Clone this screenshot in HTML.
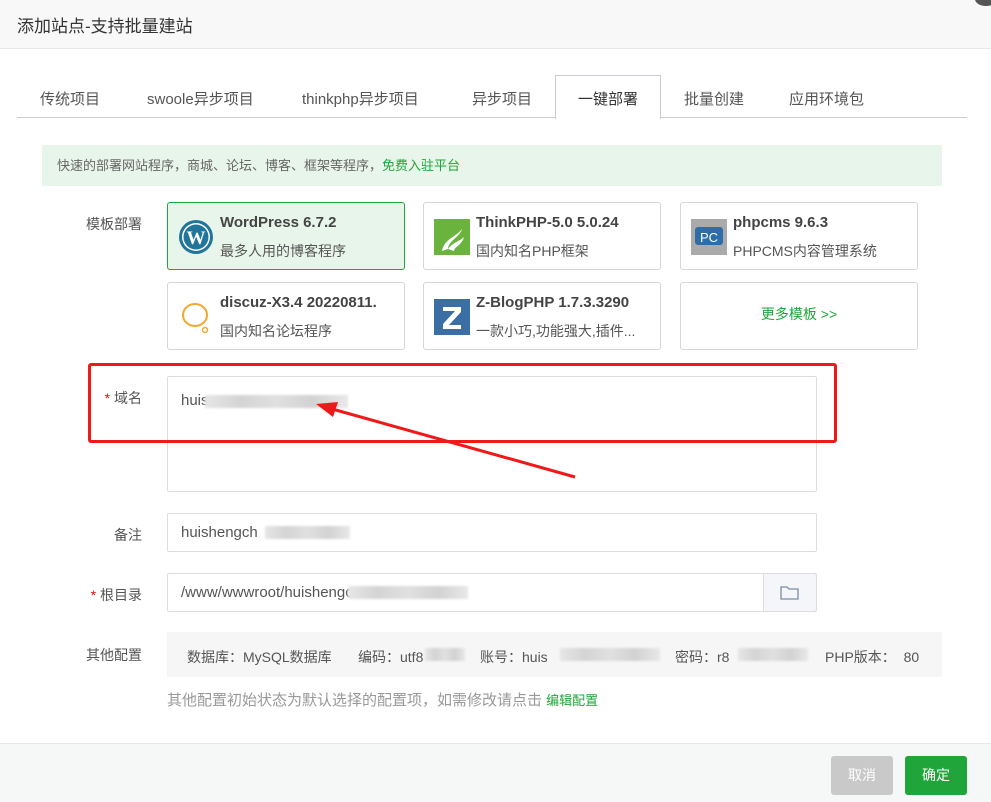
<!DOCTYPE html>
<html><head><meta charset="utf-8"><style>
*{margin:0;padding:0;box-sizing:border-box}
body{width:991px;height:802px;position:relative;background:#fff;font-family:"Liberation Sans","Noto Sans CJK SC",sans-serif;color:#555;font-size:14px;overflow:hidden}
.a{position:absolute}
.hdr{left:0;top:0;width:991px;height:49px;background:#f8f8f8;border-bottom:1px solid #e8e8e8}
.hdr span{position:absolute;left:17px;top:12px;font-size:17px;color:#333}
.tabline{left:17px;top:117px;width:950px;height:1px;background:#ccc9d8}
.tab{top:88px;font-size:15px;color:#555}
.act{left:555px;top:75px;width:106px;height:44px;border:1px solid #ccc9d8;border-bottom:none;background:#fff}
.alert{left:42px;top:145px;width:900px;height:41px;background:#e8f5ea;font-size:13px;line-height:41px;padding-left:15px;color:#666}
.lbl{font-size:14px;color:#555;text-align:right;width:100px;left:42px}
.card{width:238px;height:68px;border:1px solid #d6d6d6;border-radius:3px;background:#fff}
.card b{position:absolute;left:52px;top:11px;font-size:15px;color:#444}
.card i{position:absolute;left:52px;top:38px;font-style:normal;font-size:14px;color:#555}
.ic{position:absolute;left:10px;top:16px;width:36px;height:36px}
.inp{border:1px solid #ddd;border-radius:2px;background:#fff;font-size:15px;color:#555;padding-left:13px}
.blur{background:linear-gradient(90deg,#e6e6e6,#d4d4d4,#e0e0e0,#d2d2d2,#e8e8e8);filter:blur(1px)}
.cf{top:647px;font-size:14px;color:#555;white-space:nowrap}
</style></head><body>
<div class="a hdr"><span>添加站点-支持批量建站</span></div>
<div class="a" style="left:975px;top:-8px;width:22px;height:14px;border-radius:50%;background:#555"></div>
<div class="a tabline"></div>
<div class="a act"></div>
<div class="a tab" style="left:40px">传统项目</div>
<div class="a tab" style="left:147px">swoole异步项目</div>
<div class="a tab" style="left:302px">thinkphp异步项目</div>
<div class="a tab" style="left:472px">异步项目</div>
<div class="a tab" style="left:578px;color:#333">一键部署</div>
<div class="a tab" style="left:684px">批量创建</div>
<div class="a tab" style="left:789px">应用环境包</div>
<div class="a alert">快速的部署网站程序，商城、论坛、博客、框架等程序，<span style="color:#20a53a">免费入驻平台</span></div>

<div class="a lbl" style="top:214px">模板部署</div>
<div class="a card" style="left:167px;top:202px;background:#e8f5ea;border-color:#20a53a">
<svg class="ic" viewBox="0 0 36 36"><circle cx="18" cy="18" r="17" fill="#21759b"/><circle cx="18" cy="18" r="14" fill="#fff"/><circle cx="18" cy="18" r="12.5" fill="#21759b"/><text x="18" y="25" font-size="19" font-weight="bold" fill="#fff" text-anchor="middle" font-family="Liberation Serif">W</text></svg>
<b>WordPress 6.7.2</b><i>最多人用的博客程序</i></div>
<div class="a card" style="left:423px;top:202px">
<svg class="ic" viewBox="0 0 36 36"><rect width="36" height="36" fill="#6ab43e"/><path d="M8 32 C10 20 22 18 28 10 C26 18 14 22 14 30 Z M14 30 C18 24 26 22 30 18 C28 26 20 28 20 32Z" fill="#fff"/></svg>
<b>ThinkPHP-5.0 5.0.24</b><i>国内知名PHP框架</i></div>
<div class="a card" style="left:680px;top:202px">
<svg class="ic" viewBox="0 0 36 36"><rect width="36" height="36" fill="#aaa"/><rect x="4" y="8" width="28" height="18" rx="3" fill="#2d6ea8"/><text x="18" y="23" font-size="13" fill="#fff" text-anchor="middle">PC</text></svg>
<b>phpcms 9.6.3</b><i>PHPCMS内容管理系统</i></div>
<div class="a card" style="left:167px;top:282px">
<svg class="ic" viewBox="0 0 36 36"><ellipse cx="17" cy="16" rx="12" ry="11" fill="none" stroke="#f0a830" stroke-width="2"/><circle cx="27" cy="31" r="2.5" fill="none" stroke="#f0a830" stroke-width="1.5"/></svg>
<b>discuz-X3.4 20220811.</b><i>国内知名论坛程序</i></div>
<div class="a card" style="left:423px;top:282px">
<svg class="ic" viewBox="0 0 36 36"><rect width="36" height="36" fill="#3a6ea5"/><path d="M9 8h18v5L15 26h12v4H9v-5L21 12H9z" fill="#fff"/></svg>
<b>Z-BlogPHP 1.7.3.3290</b><i>一款小巧,功能强大,插件...</i></div>
<div class="a card" style="left:680px;top:282px;text-align:center;line-height:62px;color:#20a53a;font-size:14px">更多模板 &gt;&gt;</div>

<div class="a lbl" style="top:388px"><span style="color:#ef0808">*</span> 域名</div>
<div class="a inp" style="left:167px;top:376px;width:650px;height:116px;padding-top:15px">huis</div>
<div class="a blur" style="left:205px;top:395px;width:143px;height:13px"></div>
<div class="a" style="left:88px;top:363px;width:749px;height:80px;border:3px solid #f01919;border-radius:3px"></div>
<svg class="a" style="left:300px;top:395px" width="290" height="90"><line x1="275" y1="82" x2="25" y2="12" stroke="#f01919" stroke-width="3"/><path d="M16 9 L38 7 L33 22 Z" fill="#f01919"/></svg>

<div class="a lbl" style="top:525px">备注</div>
<div class="a inp" style="left:167px;top:513px;width:650px;height:39px;line-height:37px">huishengch</div>
<div class="a blur" style="left:265px;top:526px;width:85px;height:13px"></div>

<div class="a lbl" style="top:585px"><span style="color:#ef0808">*</span> 根目录</div>
<div class="a inp" style="left:167px;top:573px;width:650px;height:39px;line-height:37px">/www/wwwroot/huishengc</div>
<div class="a blur" style="left:348px;top:586px;width:120px;height:13px"></div>
<div class="a" style="left:763px;top:573px;width:54px;height:39px;background:#f4f6fa;border:1px solid #ddd;border-radius:0 3px 3px 0"></div>
<svg class="a" style="left:780px;top:585px" width="20" height="16"><path d="M1 2h6l2 2h9v10H1z" fill="none" stroke="#7a8ba8" stroke-width="1.3"/></svg>

<div class="a lbl" style="top:645px">其他配置</div>
<div class="a" style="left:167px;top:632px;width:775px;height:45px;background:#f6f6f6"></div>
<div class="a cf" style="left:187px">数据库：MySQL数据库</div>
<div class="a cf" style="left:358px">编码：utf8</div>
<div class="a cf" style="left:480px">账号：huis</div>
<div class="a cf" style="left:675px">密码：r8</div>
<div class="a cf" style="left:825px">PHP版本：&nbsp; 80</div>
<div class="a blur" style="left:425px;top:648px;width:40px;height:13px"></div>
<div class="a blur" style="left:560px;top:648px;width:100px;height:13px"></div>
<div class="a blur" style="left:738px;top:648px;width:70px;height:13px"></div>
<div class="a" style="left:167px;top:689px;font-size:15px;color:#999">其他配置初始状态为默认选择的配置项，如需修改请点击 <span style="color:#20a53a;font-size:13px">编辑配置</span></div>

<div class="a" style="left:0;top:743px;width:991px;height:59px;background:#f6f7f7;border-top:1px solid #e8e8e8"></div>
<div class="a" style="left:831px;top:756px;width:62px;height:39px;background:#c9c9c9;border-radius:3px;color:#fff;text-align:center;line-height:39px">取消</div>
<div class="a" style="left:905px;top:756px;width:62px;height:39px;background:#20a53a;border-radius:3px;color:#fff;text-align:center;line-height:39px">确定</div>
</body></html>
